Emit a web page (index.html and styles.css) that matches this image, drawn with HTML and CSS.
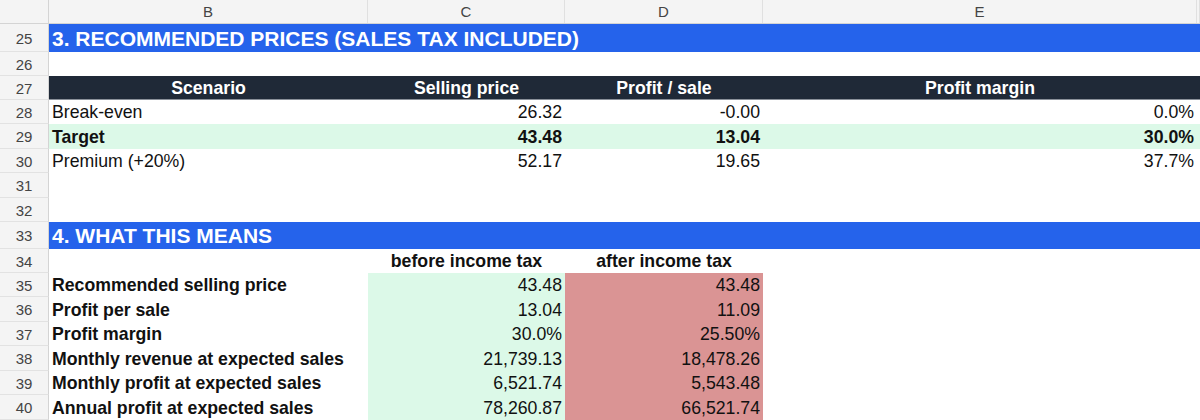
FILE: index.html
```html
<!DOCTYPE html>
<html lang="en">
<head>
<meta charset="utf-8">
<title>Recommended prices</title>
<link rel="stylesheet" href="styles.css">
</head>
<body>
<div class="sheet">
  <div class="row colhead">
    <div class="rh corner"></div>
    <div class="ch">B</div>
    <div class="ch">C</div>
    <div class="ch">D</div>
    <div class="ch">E</div>
    <div class="ch"></div>
  </div>

  <div class="row h28">
    <div class="rh">25</div>
    <div class="cell title span">3. RECOMMENDED PRICES (SALES TAX INCLUDED)</div>
  </div>
  <div class="row h24">
    <div class="rh">26</div>
  </div>
  <div class="row h24 dark">
    <div class="rh">27</div>
    <div class="cell center b">Scenario</div>
    <div class="cell center b">Selling price</div>
    <div class="cell center b">Profit / sale</div>
    <div class="cell center b">Profit margin</div>
    <div class="cell"></div>
  </div>
  <div class="row h24">
    <div class="rh">28</div>
    <div class="cell">Break-even</div>
    <div class="cell num">26.32</div>
    <div class="cell num">-0.00</div>
    <div class="cell num">0.0%</div>
  </div>
  <div class="row h25 green">
    <div class="rh">29</div>
    <div class="cell b">Target</div>
    <div class="cell num b">43.48</div>
    <div class="cell num b">13.04</div>
    <div class="cell num b">30.0%</div>
    <div class="cell"></div>
  </div>
  <div class="row h24">
    <div class="rh">30</div>
    <div class="cell">Premium (+20%)</div>
    <div class="cell num">52.17</div>
    <div class="cell num">19.65</div>
    <div class="cell num">37.7%</div>
  </div>
  <div class="row h25">
    <div class="rh">31</div>
  </div>
  <div class="row h24">
    <div class="rh">32</div>
  </div>

  <div class="row h27">
    <div class="rh">33</div>
    <div class="cell title span">4. WHAT THIS MEANS</div>
  </div>
  <div class="row h24">
    <div class="rh">34</div>
    <div class="cell"></div>
    <div class="cell center b">before income tax</div>
    <div class="cell center b">after income tax</div>
  </div>
  <div class="row h24">
    <div class="rh">35</div>
    <div class="cell b">Recommended selling price</div>
    <div class="cell num before">43.48</div>
    <div class="cell num after">43.48</div>
  </div>
  <div class="row h25">
    <div class="rh">36</div>
    <div class="cell b">Profit per sale</div>
    <div class="cell num before">13.04</div>
    <div class="cell num after">11.09</div>
  </div>
  <div class="row h24">
    <div class="rh">37</div>
    <div class="cell b">Profit margin</div>
    <div class="cell num before">30.0%</div>
    <div class="cell num after">25.50%</div>
  </div>
  <div class="row h25">
    <div class="rh">38</div>
    <div class="cell b">Monthly revenue at expected sales</div>
    <div class="cell num before">21,739.13</div>
    <div class="cell num after">18,478.26</div>
  </div>
  <div class="row h24">
    <div class="rh">39</div>
    <div class="cell b">Monthly profit at expected sales</div>
    <div class="cell num before">6,521.74</div>
    <div class="cell num after">5,543.48</div>
  </div>
  <div class="row h25">
    <div class="rh">40</div>
    <div class="cell b">Annual profit at expected sales</div>
    <div class="cell num before">78,260.87</div>
    <div class="cell num after">66,521.74</div>
  </div>
</div>
</body>
</html>
```

FILE: styles.css
```css
html, body {
  margin: 0;
  padding: 0;
  background: #ffffff;
  overflow: hidden;
}

.sheet {
  width: 1200px;
  font-family: "Liberation Sans", Arial, Helvetica, sans-serif;
  font-size: 17.7px;
  color: #111111;
}

.row {
  display: grid;
  grid-template-columns: 49px 319px 197px 198px 434px 1fr;
  box-sizing: border-box;
}

.h24 { height: 24px; }
.h25 { height: 25px; }
.h27 { height: 27px; }
.h28 { height: 28px; }

.colhead {
  height: 24px;
  background: #f4f4f4;
  border-bottom: 1px solid #d4d4d4;
}

.ch {
  display: flex;
  align-items: center;
  justify-content: center;
  font-size: 15px;
  color: #444444;
  border-right: 1px solid #e0e0e0;
}

.rh {
  display: flex;
  align-items: center;
  justify-content: center;
  padding-top: 1px;
  background: #f4f4f4;
  font-size: 15px;
  font-weight: normal;
  color: #444444;
  border-right: 1px solid #d4d4d4;
  border-bottom: 1px solid #e2e2e2;
  box-sizing: border-box;
}

.corner {
  border-bottom: none;
}

.cell {
  display: flex;
  align-items: center;
  padding: 1px 3px 0;
  white-space: nowrap;
  overflow: visible;
  min-width: 0;
}

.span {
  grid-column: 2 / -1;
}

.title {
  background: #2563eb;
  color: #ffffff;
  font-weight: bold;
  font-size: 21px;
}

.b { font-weight: bold; }

.center { justify-content: center; }

.num { justify-content: flex-end; }

.dark .cell {
  background: #1f2937;
  color: #ffffff;
  border-bottom: 1px solid #8a9099;
}

.green .cell {
  background: #dcf9e8;
}

.before { background: #dcf9e8; }
.after { background: #da9494; }
```
